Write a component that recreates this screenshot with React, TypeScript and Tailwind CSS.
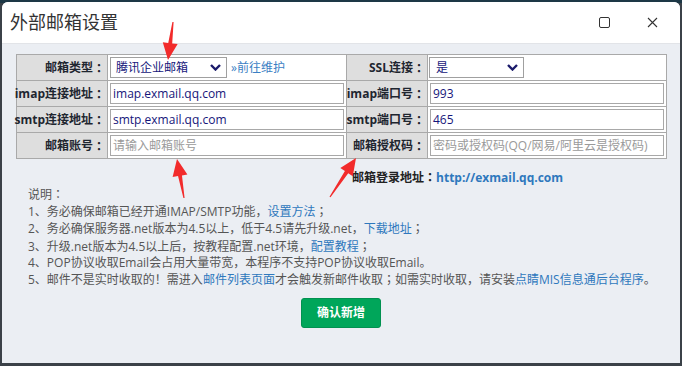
import React from "react";

type Pt = [number, number];

// red annotation arrow: thin tapered shaft + triangular head
function arrowPoints(tail: Pt, tip: Pt, headLen: number, headW: number, w0: number, w1: number) {
  const dx = tip[0] - tail[0];
  const dy = tip[1] - tail[1];
  const len = Math.hypot(dx, dy);
  const ux = dx / len;
  const uy = dy / len;
  const nx = -uy;
  const ny = ux;
  const bx = tip[0] - ux * headLen;
  const by = tip[1] - uy * headLen;
  const pts: Pt[] = [
    [tail[0] + (nx * w0) / 2, tail[1] + (ny * w0) / 2],
    [bx + (nx * w1) / 2, by + (ny * w1) / 2],
    [bx + (nx * headW) / 2, by + (ny * headW) / 2],
    tip,
    [bx - (nx * headW) / 2, by - (ny * headW) / 2],
    [bx - (nx * w1) / 2, by - (ny * w1) / 2],
    [tail[0] - (nx * w0) / 2, tail[1] - (ny * w0) / 2],
  ];
  return pts.map((p) => p.join(",")).join(" ");
}

const arrows: { tail: Pt; tip: Pt }[] = [
  { tail: [173, 22], tip: [168, 60] },
  { tail: [184, 198], tip: [177, 159] },
  { tail: [330, 197], tip: [356, 158] },
];

function Chevron() {
  return (
    <svg width="11" height="7" viewBox="0 0 11 7" className="shrink-0">
      <polyline points="1,1 5.5,5.5 10,1" fill="none" stroke="#1b1b6b" strokeWidth="2.4" />
    </svg>
  );
}

const font = "font-['Open_Sans','Noto_Sans_CJK_SC',sans-serif]";

// centred full-width punctuation (colon / semicolon), as the original font draws it
function Pc({ c }: { c: string }) {
  return <span className="font-['Noto_Sans_CJK_TC',sans-serif]">{c}</span>;
}

function Label({ text }: { text: string }) {
  return (
    <div className="bg-[#dedede] flex items-center justify-end pr-[2px] text-[12px] font-bold text-[#1f2630] whitespace-nowrap">
      {text}
      <Pc c="：" />
    </div>
  );
}

function Field({ value, placeholder }: { value?: string; placeholder?: string }) {
  return (
    <div className="bg-white flex items-center px-[2px]">
      <div className="w-full h-[21px] border border-[#a8a8a8] flex items-center px-[2px] text-[12px] whitespace-nowrap overflow-hidden">
        {value ? (
          <span className="text-[#16167a]">{value}</span>
        ) : (
          <span className="text-[#9a9a9a]">{placeholder}</span>
        )}
      </div>
    </div>
  );
}

export default function App() {
  return (
    <div className={`w-[682px] h-[366px] bg-[#3b4148] relative overflow-hidden ${font}`}>
      <div className="absolute inset-x-0 top-0 h-[3px] bg-[#1d3846]" />
      <div className="relative ml-[2px] mt-[2px] w-[678px] h-[361px] rounded-t-[6px] overflow-hidden flex flex-col bg-[#ebeef3]">
        {/* title bar */}
        <div className="h-[42px] bg-white border-b border-[#e2e4e8] flex items-center pl-[8px] pr-[22px] shrink-0">
          <div className="text-[18px] text-[#333]">外部邮箱设置</div>
          <div className="ml-auto flex items-center gap-[37px]">
            <svg width="11" height="11" viewBox="0 0 11 11">
              <rect x="0.5" y="0.5" width="10" height="10" rx="1.5" fill="none" stroke="#333" strokeWidth="1" />
            </svg>
            <svg width="11" height="11" viewBox="0 0 11 11">
              <path d="M1 1 L10 10 M10 1 L1 10" stroke="#333" strokeWidth="1.1" />
            </svg>
          </div>
        </div>

        {/* body */}
        <div className="flex-1 flex flex-col pt-[10px]">
          <div className="ml-[14px] w-[651px] grid grid-cols-[90px_238px_80px_238px] auto-rows-[25px] gap-px p-px bg-[#a9a9a9]">
            <Label text="邮箱类型" />
            <div className="bg-white flex items-center px-[2px] gap-[4px]">
              <div className="w-[117px] h-[21px] border border-[#a0a0a0] flex items-center justify-between pl-[5px] pr-[5px] text-[12px] text-[#16167a]">
                <span>腾讯企业邮箱</span>
                <Chevron />
              </div>
              <span className="text-[12px] text-[#3b7fc4]">»前往维护</span>
            </div>
            <Label text="SSL连接" />
            <div className="bg-white flex items-center px-[1px]">
              <div className="w-[95px] h-[21px] border border-[#a0a0a0] flex items-center justify-between pl-[6px] pr-[5px] text-[12px] text-[#16167a]">
                <span>是</span>
                <Chevron />
              </div>
            </div>

            <Label text="imap连接地址" />
            <Field value="imap.exmail.qq.com" />
            <Label text="imap端口号" />
            <Field value="993" />

            <Label text="smtp连接地址" />
            <Field value="smtp.exmail.qq.com" />
            <Label text="smtp端口号" />
            <Field value="465" />

            <Label text="邮箱账号" />
            <Field placeholder="请输入邮箱账号" />
            <Label text="邮箱授权码" />
            <Field placeholder="密码或授权码(QQ/网易/阿里云是授权码)" />
          </div>

          <div className="ml-[350px] mt-[10px] leading-[16px] text-[12px] font-bold whitespace-nowrap">
            <span className="text-[#222]">
              邮箱登录地址
              <Pc c="：" />
            </span>
            <span className="text-[#2e78bd]">http://exmail.qq.com</span>
          </div>

          <div className="ml-[26px] text-[12px] leading-[16.2px] text-[#555] whitespace-nowrap">
            <div>
              说明
              <Pc c="：" />
            </div>
            <div>
              1、务必确保邮箱已经开通IMAP/SMTP功能，<span className="text-[#2e78bd]">设置方法</span>
              <Pc c="；" />
            </div>
            <div>
              2、务必确保服务器.net版本为4.5以上，低于4.5请先升级.net，<span className="text-[#2e78bd]">下载地址</span>
              <Pc c="；" />
            </div>
            <div>
              3、升级.net版本为4.5以上后，按教程配置.net环境，<span className="text-[#2e78bd]">配置教程</span>
              <Pc c="；" />
            </div>
            <div>4、POP协议收取Email会占用大量带宽，本程序不支持POP协议收取Email。</div>
            <div>
              5、邮件不是实时收取的！需进入<span className="text-[#2e78bd]">邮件列表页面</span>
              才会触发新邮件收取
              <Pc c="；" />
              如需实时收取，请安装<span className="text-[#2e78bd]">点睛MIS信息通后台程序</span>。
            </div>
          </div>

          <div className="flex justify-center mt-[10px]">
            <button className="w-[80px] h-[30px] rounded-[3px] bg-[#00a65a] border border-[#019150] text-white text-[12px] font-bold">
              确认新增
            </button>
          </div>
        </div>
      </div>

      {/* annotation arrows */}
      <svg className="absolute inset-0 pointer-events-none" width="682" height="366">
        {arrows.map((a, i) => (
          <polygon key={i} points={arrowPoints(a.tail, a.tip, 17, 15, 1.2, 4)} fill="#f22b2b" />
        ))}
      </svg>
    </div>
  );
}
